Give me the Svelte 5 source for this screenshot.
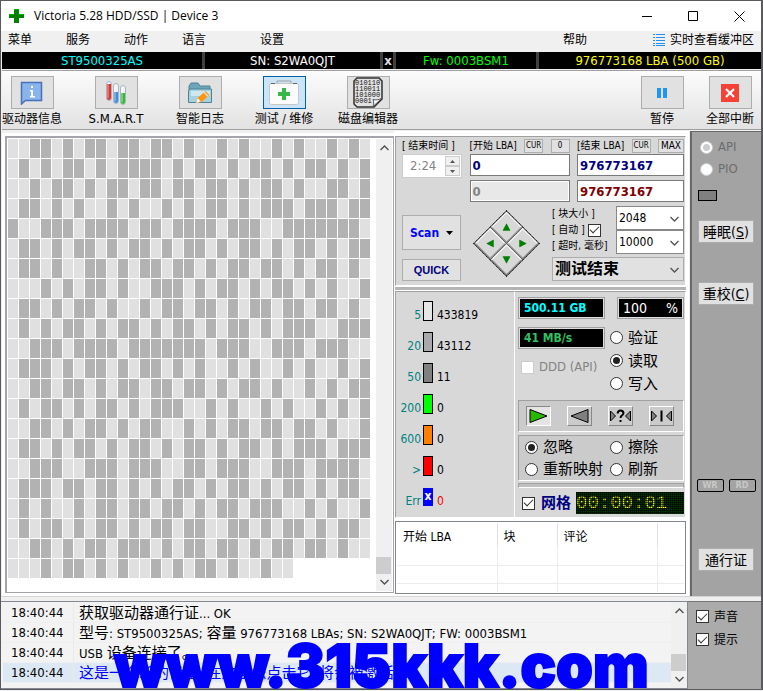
<script lang="ts">
	const rows = [
		'001101011011011010010100101001010',
		'010101101011110101101011010110101',
		'001011010110110110110101101001101',
		'011010100101001010110101110111011',
		'100111011110110111101110011111110',
		'011010110101101011010110101101011',
		'011010011010110110101101101011010',
		'000101011010011101011010110101001',
		'011010110100101101101011011011010',
		'010101101011010110101101011100111',
		'001110111101111111011100111011100',
		'011101011010110101001010010100101',
		'001101101011011011010110100101011',
		'010110101101011100101001010010101',
		'001101011010110010101101101101001',
		'011010110101101011010110101110111',
		'001110011101110011011100111011110',
		'011101101101010110101101011010110',
		'010100101101101101011011100101001',
		'010110101101011011001101011010110',
		'001101011011101011011010110110100',
		'00010110101001010110100100'
	];
	const cells = rows.join('').split('');

	const legend = [
		{ label: '5', color: '#e6e6e6', count: 433819 },
		{ label: '20', color: '#a9a9ad', count: 43112 },
		{ label: '50', color: '#808080', count: 11 },
		{ label: '200', color: '#00ff00', count: 0 },
		{ label: '600', color: '#ff8000', count: 0 },
		{ label: '>', color: '#ff0000', count: 0 },
		{ label: 'Err', color: '#0000ff', count: 0, error: true }
	];

	const tools = [
		{ icon: 'info', label: '驱动器信息' },
		{ icon: 'smart', label: 'S.M.A.R.T' },
		{ icon: 'logs', label: '智能日志' },
		{ icon: 'test', label: '测试 / 维修' },
		{ icon: 'hex', label: '磁盘编辑器' }
	];

	const log = [
		{ time: '18:40:44', text: '获取驱动器通行证... OK' },
		{ time: '18:40:44', text: '型号: ST9500325AS; 容量 976773168 LBAs; SN: S2WA0QJT; FW: 0003BSM1' },
		{ time: '18:40:44', text: 'USB 设备连接了。' },
		{ time: '18:40:44', text: '这是一个新的设备, 在这里您点击它, 将会被激活' }
	];

	// Chinese runs are set larger than the latin text around them
	const split = (text: string) => text.split(/([\u3000-\u9fff]+)/).filter(Boolean);
	const isHan = (text: string) => /[\u3000-\u9fff]/.test(text);

	let activeTool = $state('test');
	let mode = $state('read');
	let action = $state('ignore');
	let grid = $state(true);
	let sound = $state(true);
	let hints = $state(true);
	let auto = $state(true);
</script>

{#snippet chevron(up: boolean)}
	<svg class="chevron" viewBox="0 0 9 6" width="9" height="6">
		<path d={up ? 'M0.5 5 4.5 1 8.5 5' : 'M0.5 1 4.5 5 8.5 1'} fill="none" stroke="currentColor" stroke-width="1.4" />
	</svg>
{/snippet}

<div class="window">
	<header class="titlebar">
		<svg width="15" height="14" viewBox="0 0 15 14">
			<path d="M5 0h5v5h5v4h-5v5H5V9H0V5h5z" fill="#008000" />
			<path d="M5 0h5v1H5zM0 5h5v1H0zM10 5h5v1h-5z" fill="#00b000" />
		</svg>
		<h1>Victoria 5.28 HDD/SSD | Device 3</h1>
		<div class="controls">
			<button aria-label="Minimize"><svg width="11" height="11"><path d="M0 5.5h10" stroke="#000" /></svg></button>
			<button aria-label="Maximize"><svg width="11" height="11"><path d="M.5.5h9v9h-9z" fill="none" stroke="#000" /></svg></button>
			<button aria-label="Close"><svg width="11" height="11"><path d="M.5.5l10 10M10.5.5l-10 10" stroke="#000" /></svg></button>
		</div>
	</header>

	<nav class="menu">
		<button>菜单</button>
		<button>服务</button>
		<button>动作</button>
		<button>语言</button>
		<button class="settings">设置</button>
		<button class="help">帮助</button>
		<button class="buffer">
			<svg width="12" height="12" viewBox="0 0 12 12">
				<path d="M0 .5h2M3 .5h9M0 3.5h2M3 3.5h9M0 6.5h2M3 6.5h9M0 9.5h2M3 9.5h9M0 11.5h2M3 11.5h9" stroke="#2090f0" />
			</svg>
			实时查看缓冲区
		</button>
	</nav>

	<div class="drive">
		<span class="model">ST9500325AS</span>
		<span class="serial">SN: S2WA0QJT</span>
		<button class="hide" aria-label="Hide serial">x</button>
		<span class="firmware">Fw: 0003BSM1</span>
		<span class="capacity">976773168 LBA (500 GB)</span>
	</div>

	<div class="toolbar">
		{#each tools as tool (tool.icon)}
			<button class="tool {tool.icon}" class:active={activeTool === tool.icon} onclick={() => (activeTool = tool.icon)}>
				<span class="face">
					{#if tool.icon === 'info'}
						<svg width="24" height="24" viewBox="0 0 24 24">
							<path d="M1.5 1.5h20v18H5.500l-4 3.500z" fill="#8ab4ee" stroke="#4772b8" stroke-width="1.500" />
							<path d="M11 5h2v2h-2zM10 9h3v6h2v1.500h-5V15h1v-4.500h-1z" fill="#fff" />
						</svg>
					{:else if tool.icon === 'smart'}
						<svg width="22" height="26" viewBox="0 0 22 26">
							<g stroke="#a8b4c0" fill="#eef4fa">
								<rect x="1.500" y="1.500" width="5" height="19" rx="2.500" />
								<rect x="8.500" y="3.500" width="5" height="20" rx="2.500" />
								<rect x="15.500" y="5.500" width="5" height="19" rx="2.500" />
							</g>
							<path d="M2 4h4v14a2 2 0 0 1-4 0z" fill="#e03428" />
							<path d="M9 12h4v9a2 2 0 0 1-4 0z" fill="#3f8de0" />
							<path d="M16 13h4v9a2 2 0 0 1-4 0z" fill="#31bd31" />
							<path d="M3 3v15M10 5v16M17 7v15" stroke="#fff" opacity=".6" />
						</svg>
					{:else if tool.icon === 'logs'}
						<svg width="26" height="24" viewBox="0 0 26 24">
							<path d="M2 21V5l2-3h7l2 3h10v4" fill="#6fa5b9" stroke="#4c8299" />
							<path d="M3 8h21.500v13.500h-23V10z" fill="#a9d2df" stroke="#4c8299" />
							<path d="M4 10h19v5H4z" fill="#cfe8ef" />
							<path d="M9 22l1.500-5 8-7 4 4-8 7z" fill="#ff9410" />
							<path d="M9 22l1.500-5 3.500 3.500z" fill="#fff" stroke="#d7b48a" stroke-width=".5" />
							<path d="M17 11.300l4 4" stroke="#d9e4e9" stroke-width="1.500" />
						</svg>
					{:else if tool.icon === 'test'}
						<svg width="32" height="26" viewBox="0 0 32 26">
							<path d="M9 3V1h14v2" fill="none" stroke="#a0a0a0" />
							<rect x="1.500" y="3.500" width="29" height="21" rx="2" fill="#fbfbfb" stroke="#c8c8c8" />
							<path d="M3 3.500h4M25 3.500h4" stroke="#666" />
							<path d="M14 8h4v4h4v4h-4v4h-4v-4h-4v-4h4z" fill="#37b848" />
						</svg>
					{:else}
						<svg width="30" height="31" viewBox="0 0 30 31">
							<path d="M4 1h22l3 3v18l-8 8H4l-3-3V4z" fill="#e2e2e2" stroke="#303030" stroke-width="1.500" />
							<path d="M20 29.500c1-2 1-5 0-7 3 1 6 0 8.500-1z" fill="#fff" stroke="#555" />
							<g font-family="Liberation Mono" font-size="7" fill="#111">
								<text x="2" y="8">010110</text>
								<text x="2" y="14">110011</text>
								<text x="2" y="20">101000</text>
								<text x="2" y="26">0001</text>
							</g>
						</svg>
					{/if}
				</span>
				{tool.label}
			</button>
		{/each}
		<button class="tool pause">
			<span class="face"><svg width="10" height="10"><path d="M0 0h4v10H0zM6 0h4v10H6z" fill="#1e96f5" /></svg></span>
			暂停
		</button>
		<button class="tool break">
			<span class="face">
				<svg width="18" height="18"><path d="M0 0h18v18H0z" fill="#f44336" /><path d="M5 5l8 8M13 5l-8 8" stroke="#fff" stroke-width="2.200" /></svg>
			</span>
			全部中断
		</button>
	</div>

	<main>
		<section class="map">
			<div class="cells">
				{#each cells as cell}
					<i class:slow={cell === '1'}></i>
				{/each}
			</div>
			<div class="scrollbar">
				{@render chevron(true)}
				<span class="thumb"></span>
				{@render chevron(false)}
			</div>
		</section>

		<div class="middle">
			<section class="panel scan">
				<div class="range">
					<div class="stack">
						<div class="caption"><label for="end-time">[ 结束时间 ]</label></div>
						<div class="spin">
							<input id="end-time" value="2:24" disabled />
							<div>
								<button aria-label="Increase" disabled><svg width="5" height="3"><path d="M0 3l2.500-3L5 3z" fill="#555" /></svg></button>
								<button aria-label="Decrease" disabled><svg width="5" height="3"><path d="M0 0l2.500 3L5 0z" fill="#555" /></svg></button>
							</div>
						</div>
					</div>
					<div class="stack start">
						<div class="caption">
							<label for="start-lba">[开始 LBA]</label>
							<button>CUR</button>
							<button>0</button>
						</div>
						<input id="start-lba" class="lba" value="0" />
						<input class="lba" value="0" aria-label="Current LBA" disabled />
					</div>
					<div class="stack end">
						<div class="caption">
							<label for="end-lba">[结束 LBA]</label>
							<button>CUR</button>
							<button class="max">MAX</button>
						</div>
						<input id="end-lba" class="lba" value="976773167" />
						<input class="lba last" value="976773167" aria-label="Last LBA" />
					</div>
				</div>

				<div class="run">
					<div class="actions">
						<button class="go">Scan <svg width="7" height="4"><path d="M0 0h7L3.500 4z" fill="#000" /></svg></button>
						<button class="quick">QUICK</button>
					</div>
					<div class="pad">
						<div>
							{#each ['Up', 'Right', 'Left', 'Down'] as direction}
								<button aria-label={direction} class={direction.toLowerCase()}>
									<svg width="8" height="8" viewBox="0 0 8 8"><path d="M0 7.500 4 0l4 7.500z" fill="#008000" /></svg>
								</button>
							{/each}
						</div>
					</div>
					<div class="options">
						<div class="names">
							<label for="block">[ 块大小 ]</label>
							<label>[ 自动 ] <input type="checkbox" bind:checked={auto} /></label>
							<label for="timeout">[ 超时, 毫秒]</label>
						</div>
						<div class="selects">
							<div class="select"><select id="block"><option>2048</option></select>{@render chevron(false)}</div>
							<div class="select"><select id="timeout"><option>10000</option></select>{@render chevron(false)}</div>
						</div>
						<div class="select finish">
							<select aria-label="结束操作"><option>测试结束</option></select>{@render chevron(false)}
						</div>
					</div>
				</div>
			</section>

			<div class="progress"></div>

			<div class="results">
				<section class="panel legend">
					{#each legend as item (item.label)}
						<div>
							<span class="limit">{item.label}</span>
							{#if item.error}
								<span class="error">x</span>
							{:else}
								<i style="background: {item.color}"></i>
							{/if}
							<span class:failed={item.error}>{item.count}</span>
						</div>
					{/each}
				</section>

				<section class="panel status">
					<div class="readout">
						<div class="stack">
							<output class="size">500.11 GB</output>
							<output class="speed">41 MB/s</output>
							<label class="ddd"><input type="checkbox" disabled /> DDD (API)</label>
						</div>
						<div class="modes">
							<output class="percent"><span>100</span><span>%</span></output>
							<label><input type="radio" value="verify" bind:group={mode} /> 验证</label>
							<label><input type="radio" value="read" bind:group={mode} /> 读取</label>
							<label><input type="radio" value="write" bind:group={mode} /> 写入</label>
						</div>
					</div>
					<div class="group player">
						<button class="on" aria-label="Forward"><svg width="19" height="14"><path d="M1 .5v13L18 7z" fill="#28b800" stroke="#000" /></svg></button>
						<button aria-label="Backward"><svg width="19" height="14"><path d="M18 .5v13L1 7z" fill="#808080" stroke="#000" /></svg></button>
						<button aria-label="Random">
							<svg width="23" height="14">
								<path d="M1.500 2v10l5-5zM21.500 2v10l-5-5z" fill="#808080" stroke="#000" />
								<path d="M8.500 4.500Q9 1.500 11.500 1.500t3 2.500q0 1.500-1.500 2.300T11.500 9M11.500 11v2" fill="none" stroke="#000" stroke-width="2" />
							</svg>
						</button>
						<button aria-label="Butterfly">
							<svg width="23" height="14">
								<path d="M1.500 2v10l5-5zM21.500 2v10l-5-5z" fill="#808080" stroke="#000" />
								<path d="M11.500 1.500v11" stroke="#000" stroke-width="2" />
							</svg>
						</button>
					</div>
					<div class="group remap">
						<label><input type="radio" value="ignore" bind:group={action} /> 忽略</label>
						<label><input type="radio" value="erase" bind:group={action} /> 擦除</label>
						<label><input type="radio" value="remap" bind:group={action} /> 重新映射</label>
						<label><input type="radio" value="refresh" bind:group={action} /> 刷新</label>
					</div>
					<div class="divider"></div>
					<div class="elapsed">
						<label><input type="checkbox" bind:checked={grid} /> 网格</label>
						<time>00:00:01</time>
					</div>
				</section>
			</div>

			<div class="defects">
				<table>
					<thead>
						<tr><th class="first">开始 LBA</th><th class="block">块</th><th class="comment">评论</th><th></th></tr>
					</thead>
					<tbody>
						<tr><td></td><td></td><td></td><td></td></tr>
						<tr><td></td><td></td><td></td><td></td></tr>
						<tr class="cut"><td></td><td></td><td></td><td></td></tr>
					</tbody>
				</table>
			</div>
		</div>

		<aside>
			<label class="off"><input type="radio" name="access" checked disabled /> API</label>
			<label class="off"><input type="radio" name="access" disabled /> PIO</label>
			<span class="led"></span>
			<button class="sleep">睡眠(<u>S</u>)</button>
			<button class="recal">重校(<u>C</u>)</button>
			<div class="lamps"><span>WR</span><span>RD</span></div>
			<button class="passport">通行证</button>
		</aside>
	</main>

	<footer>
		<section class="log">
			<div class="lines">
				{#each log as entry, i}
					<p class:current={i === log.length - 1}>
						<time>{entry.time}</time>
						<span class="message">{#each split(entry.text) as part}<span class:han={isHan(part)}>{part}</span>{/each}</span>
					</p>
				{/each}
			</div>
			<div class="scrollbar">
				{@render chevron(true)}
				<span class="thumb"></span>
				{@render chevron(false)}
			</div>
			<strong class="watermark">www.315kkk.com</strong>
		</section>
		<div class="toggles">
			<label><input type="checkbox" bind:checked={sound} /> 声音</label>
			<label><input type="checkbox" bind:checked={hints} /> 提示</label>
		</div>
	</footer>
</div>

<style>
	:global(body) {
		margin: 0;
		background: #f0f0f0;
	}

	.window {
		border: 1px solid #5a5a5e;
		border-right-width: 2px;
		background: #f0f0f0;
		color: #000;
		font: 12px/16px 'DejaVu Sans Condensed', 'Noto Sans CJK SC', sans-serif;
		white-space: nowrap;
		overflow: hidden;
	}

	.window * {
		box-sizing: border-box;
	}

	button,
	input,
	select {
		margin: 0;
		padding: 0;
		border: 0;
		border-radius: 0;
		background: none;
		font: inherit;
		color: inherit;
	}

	svg {
		display: block;
		flex-shrink: 0;
	}

	.titlebar {
		display: flex;
		align-items: center;
		height: 30px;
		padding: 0 16px 0 8px;
		background: #fff;
	}

	.titlebar h1 {
		flex: 1;
		margin: 0 0 0 10px;
		font: 12px/16px 'Open Sans', sans-serif;
	}

	.controls {
		display: flex;
		gap: 35px;
	}

	.menu {
		display: flex;
		align-items: center;
		gap: 34px;
		height: 20px;
		padding: 0 7px 2px 7px;
	}

	.menu .settings {
		margin-left: 20px;
	}

	.menu .help {
		margin-left: auto;
	}

	.menu .buffer {
		display: flex;
		align-items: center;
		gap: 5px;
		margin-left: 32px;
	}

	.drive {
		display: grid;
		grid-template-columns: 200fr 175fr 10px 140fr 222fr;
		gap: 3px;
		margin: 1px 0 0 1px;
		background: #404040;
		font-size: 13px;
		line-height: 17px;
		text-align: center;
	}

	.drive > * {
		background: #000;
	}

	.model {
		color: #00ffff;
	}

	.serial {
		color: #fff;
	}

	.hide {
		color: #ddd;
		font-weight: bold;
	}

	.firmware {
		color: #00ff00;
	}

	.capacity {
		color: #ffff00;
	}

	.toolbar {
		display: flex;
		gap: 24px;
		height: 60px;
		margin: 1px 0 0 1px;
		padding: 5px 1px 0 0;
		border: 1px solid #a0a0a0;
		border-width: 1px 0;
		background: linear-gradient(#fcfcfc, #e2e2e2);
	}

	.tool {
		display: flex;
		flex-direction: column;
		align-items: center;
		width: 60px;
	}

	.tool.smart {
		font-size: 13px;
	}

	.tool .face {
		display: flex;
		align-items: center;
		justify-content: center;
		width: 43px;
		height: 33px;
		margin-bottom: 2px;
		border: 1px solid #adadad;
		background: #e1e1e1;
	}

	.tool.active .face {
		border-color: #0060a8;
		background: #cce4f7;
	}

	.pause {
		margin-left: auto;
	}

	.break {
		margin-left: -16px;
	}

	main {
		display: grid;
		grid-template-columns: minmax(0, 1fr) 295px 72px;
		height: 466px;
		margin-top: 1px;
		border-bottom: 1px solid #d4d4d4;
	}

	.map {
		display: flex;
		margin: 5px 0 3px 4px;
		border: 2px solid #a4a4aa;
		border-width: 2px 1px 1px 2px;
		outline: 3px solid #fff;
		background: #fff;
		padding: 1px;
	}

	.cells {
		flex: 1;
		display: grid;
		grid-template-columns: repeat(33, 1fr);
		grid-auto-rows: 19px;
		align-content: start;
		gap: 1px;
		margin-right: 6px;
	}

	.cells i {
		background: #e0e0e0;
	}

	.cells .slow {
		background: #b2b2b2;
	}

	.scrollbar {
		display: flex;
		flex-direction: column;
		align-items: center;
		width: 16px;
		padding: 6px 0;
		background: #f0f0f0;
		color: #505050;
	}

	.thumb {
		align-self: stretch;
		height: 17px;
		margin: auto 1px 5px 0;
		background: #cdcdcd;
	}

	.middle {
		position: relative;
		display: flex;
		flex-direction: column;
		padding: 5px 3px 0 1px;
		background: #fff;
	}

	.panel {
		border: 1px solid #a0a0a0;
		border-color: #a0a0a0 #fff #fff #a0a0a0;
		background: #d8d8d8;
	}

	.stack {
		display: flex;
		flex-direction: column;
		gap: 4px;
	}

	.scan {
		height: 150px;
		padding: 1px 1px 4px 6px;
	}

	.range,
	.run {
		display: flex;
		justify-content: space-between;
	}

	.range {
		height: 68px;
	}

	.range .stack:first-child {
		width: 60px;
	}

	.range .start {
		width: 100px;
	}

	.range .end {
		width: 107px;
	}

	.caption {
		display: flex;
		align-items: center;
		justify-content: space-between;
		height: 16px;
		margin-bottom: -4px;
		font-size: 10px;
	}

	.caption button {
		width: 19px;
		height: 14px;
		border: 1px solid #adadad;
		background: #e1e1e1;
		font-size: 8px;
		line-height: 12px;
	}

	.caption .max {
		width: 26px;
		font-size: 10px;
	}

	.spin {
		display: flex;
		height: 24px;
		padding: 1px;
		border: 1px solid #ccc;
		background: #fff;
	}

	.spin input {
		flex: 1;
		min-width: 0;
		padding-left: 6px;
		color: #838383;
		font-size: 13px;
	}

	.spin button {
		display: flex;
		align-items: center;
		justify-content: center;
		width: 15px;
		height: 10px;
		border: 1px solid #ccc;
		background: #f0f0f0;
	}

	.lba {
		width: 100%;
		height: 22px;
		padding: 0 2px;
		border: 1px solid #7a7a7a;
		background: #fff;
		color: #000080;
		font-size: 13px;
		font-weight: bold;
	}

	.lba:disabled {
		border-color: #7a7a7a;
		background: #e8e8e8;
		color: #838383;
		box-shadow: inset 0 0 0 1px #fff;
	}

	.lba.last {
		color: #800000;
	}

	.run {
		height: 75px;
	}

	.actions {
		display: flex;
		flex-direction: column;
		justify-content: end;
		gap: 9px;
		width: 59px;
	}

	.actions button {
		height: 22px;
		border: 1px solid #adadad;
		background: #e1e1e1;
		color: #000080;
		font-weight: bold;
	}

	.actions .go {
		display: flex;
		align-items: center;
		justify-content: center;
		gap: 7px;
		height: 35px;
		color: #0000ff;
	}

	.actions .quick {
		font: bold 11px/20px 'Liberation Sans', sans-serif;
	}

	.pad {
		display: flex;
		align-items: center;
		justify-content: center;
		width: 66px;
	}

	.pad div {
		display: grid;
		grid-template-columns: repeat(2, 22px);
		gap: 1px;
		background: #555;
		rotate: 45deg;
		border: 1px dotted #000;
	}

	.pad button {
		display: flex;
		align-items: center;
		justify-content: center;
		height: 22px;
		border: 1px solid #fff;
		border-right-color: #888;
		border-bottom-color: #888;
		background: #d8d8d8;
	}

	.pad .up svg {
		rotate: -45deg;
	}

	.pad .right svg {
		rotate: 45deg;
	}

	.pad .left svg {
		rotate: -135deg;
	}

	.pad .down svg {
		rotate: 135deg;
	}

	.options {
		display: grid;
		grid-template-columns: 64px 68px;
		grid-template-rows: 48px 24px;
		row-gap: 3px;
	}

	.names {
		display: flex;
		flex-direction: column;
		font-size: 10px;
		line-height: 14px;
	}

	.names label {
		display: flex;
		align-items: center;
		gap: 3px;
		height: 16px;
	}

	.select {
		position: relative;
		height: 24px;
		border: 1px solid #888;
		background: #fff;
	}

	.select select {
		appearance: none;
		width: 100%;
		height: 100%;
		padding-left: 2px;
	}

	.select .chevron {
		position: absolute;
		right: 4px;
		top: 9px;
		color: #555;
		pointer-events: none;
	}

	.finish {
		grid-column: 1 / -1;
		border-color: #adadad;
		background: #e1e1e1;
		font-size: 16px;
		font-weight: bold;
	}

	.progress {
		height: 5px;
		border: solid #fff;
		border-width: 1px 0;
		background: #b4b4b4;
	}

	.results {
		display: grid;
		grid-template-columns: 120px 1fr;
	}

	.legend {
		height: 227px;
		padding-top: 9px;
	}

	.legend div {
		display: flex;
		align-items: center;
		height: 31px;
		padding-bottom: 11px;
		gap: 4px;
	}

	.legend i,
	.error {
		width: 10px;
		height: 20px;
		border: 1px solid #000;
	}

	.legend span {
		margin-top: 8px;
	}

	.legend .limit {
		width: 25px;
		margin-right: -2px;
		text-align: right;
		color: #008080;
	}

	.legend .error {
		height: 18px;
		margin-top: 0;
		border: 0;
		background: #0000ff;
		color: #fff;
		font-weight: bold;
		text-align: center;
	}

	.legend .failed {
		color: #ff0000;
	}

	.status {
		padding: 5px 1px 0 3px;
		border-left: 0;
	}

	.readout {
		display: flex;
		justify-content: space-between;
		height: 103px;
	}

	.readout .stack {
		width: 87px;
		gap: 8px;
	}

	output {
		display: block;
		height: 22px;
		padding: 0 5px;
		border: 1px solid #a0a0a0;
		background: #000;
		box-shadow: inset 0 0 0 1px #ddd;
		line-height: 20px;
	}

	.size,
	.speed {
		font-weight: bold;
	}

	.size {
		color: #00ffff;
	}

	.speed {
		color: #30c060;
	}

	.percent {
		display: flex;
		justify-content: space-between;
		width: 67px;
		margin-bottom: 7px;
		color: #fff;
		font-size: 14px;
	}

	.modes label,
	.remap label {
		display: flex;
		align-items: center;
		gap: 5px;
		height: 23px;
		font-size: 15px;
	}

	.modes label {
		margin-left: -7px;
	}

	.ddd {
		display: flex;
		align-items: center;
		gap: 5px;
		padding: 2px 3px;
		color: #838383;
		font-size: 13px;
	}

	.group {
		border: 1px solid #a0a0a0;
		border-color: #a0a0a0 #fff #fff #a0a0a0;
		background: #cbcbcb;
	}

	.player {
		display: flex;
		gap: 16px;
		height: 32px;
		padding: 5px 7px;
	}

	.player button {
		display: flex;
		align-items: center;
		justify-content: center;
		width: 25px;
		height: 20px;
		border: 1px solid #fff;
		border-right-color: #888;
		border-bottom-color: #888;
	}

	.player .on {
		border-color: #888 #fff #fff #888;
		background: #e4e4e4;
	}

	.remap {
		display: grid;
		grid-template-columns: 85px 1fr;
		height: 46px;
		margin: 3px 0 2px;
		padding-left: 6px;
		align-content: start;
	}

	.remap label {
		height: 22px;
	}

	.divider {
		height: 5px;
		border: 1px solid #a0a0a0;
		border-bottom-color: #fff;
		background: #c0c0c0;
	}

	.elapsed {
		display: flex;
		align-items: center;
		justify-content: space-between;
		margin-top: 4px;
		padding-left: 4px;
	}

	.elapsed label {
		display: flex;
		align-items: center;
		gap: 6px;
		color: #000080;
		font-size: 15px;
		font-weight: bold;
	}

	.elapsed time {
		position: relative;
		width: 108px;
		height: 22px;
		background: #003800;
		color: #ffff00;
		font: 19px/22px 'Liberation Mono', monospace;
	}

	/* lcd dots laid over the digits */
	.elapsed time::after {
		content: '';
		position: absolute;
		inset: 0;
		background:
			repeating-linear-gradient(rgba(0, 0, 0, 0.6) 0 1px, transparent 1px 2px),
			repeating-linear-gradient(90deg, rgba(0, 0, 0, 0.5) 0 1px, transparent 1px 2px);
	}

	.defects {
		height: 73px;
		margin-top: 3px;
		padding: 1px;
		border: 1px solid #828790;
		background: #fff;
	}

	table {
		width: 100%;
		table-layout: fixed;
		border-collapse: collapse;
	}

	th {
		height: 24px;
		padding: 4px 6px 0;
		border-right: 1px solid #e2e2e2;
		font-weight: normal;
		text-align: left;
	}

	th:last-child,
	td:last-child {
		border-right: 0;
	}

	.first {
		width: 100px;
	}

	.block {
		width: 60px;
	}

	.comment {
		width: 100px;
	}

	td {
		height: 18px;
		padding: 0;
		border-right: 1px solid #ececec;
		border-bottom: 1px solid #ececec;
	}

	.cut td {
		height: 9px;
		border-bottom: 0;
	}

	aside {
		display: flex;
		flex-direction: column;
		align-items: center;
		margin-left: 1px;
		padding: 4px 1px 25px 0;
		border: 2px solid #696969;
		border-width: 1px 0 0 2px;
		background: #a3a3a3;
	}

	aside label {
		display: flex;
		align-items: center;
		align-self: start;
		gap: 5px;
		height: 22px;
		padding-left: 8px;
		font-size: 13px;
	}

	.off {
		color: #6c6c6c;
	}

	.led {
		align-self: start;
		width: 19px;
		height: 11px;
		margin: 10px 0 19px 6px;
		border: 1px solid #000;
		background: #808080;
	}

	aside button {
		width: 56px;
		height: 23px;
		border: 1px solid #adadad;
		background: #e1e1e1;
		font-size: 14px;
		line-height: 18px;
	}

	.recal {
		margin-top: 39px;
	}

	.lamps {
		display: flex;
		gap: 5px;
		margin-top: auto;
	}

	.lamps span {
		width: 27px;
		height: 13px;
		border: 1px solid #000;
		border-radius: 2px;
		color: #c8c8c8;
		font-size: 9px;
		font-weight: bold;
		line-height: 11px;
		text-align: center;
	}

	.passport {
		margin-top: 56px;
	}

	input[type='checkbox'],
	input[type='radio'] {
		display: grid;
		place-items: center;
		flex-shrink: 0;
		appearance: none;
		width: 13px;
		height: 13px;
		border: 1px solid #333;
		background: #fff;
	}

	input[type='radio'] {
		border-radius: 50%;
	}

	input[type='checkbox']:disabled,
	input[type='radio']:disabled {
		border-color: #ccc;
	}

	input[type='checkbox']:checked::before {
		content: '';
		width: 8px;
		height: 4px;
		margin-bottom: 3px;
		border: solid #333;
		border-width: 0 0 1px 1px;
		rotate: -45deg;
	}

	input[type='radio']:checked::before {
		content: '';
		width: 7px;
		height: 7px;
		border-radius: 50%;
		background: #222;
	}

	input[type='radio']:disabled:checked::before {
		background: #ccc;
	}

	footer {
		display: grid;
		grid-template-columns: 1fr 73px;
		margin-top: 4px;
		height: 88px;
	}

	.log {
		position: relative;
		display: flex;
		border: 1px solid #828790;
		border-left: 0;
		background: #f3f3f3;
	}

	.lines {
		flex: 1;
		padding: 1px 0 0 2px;
		font-size: 13px;
	}

	.lines p {
		display: flex;
		height: 20px;
		margin: 0;
		border-bottom: 1px solid #efefef;
		line-height: 20px;
	}

	.lines time {
		width: 71px;
		padding-left: 8px;
		border-right: 1px solid #eaeaea;
	}

	.message {
		padding-left: 5px;
	}

	.han {
		font-size: 15px;
	}

	.current {
		background: #dce9f4;
	}

	.current .message {
		color: #0000ff;
	}

	.log .thumb {
		margin-bottom: 5px;
	}

	.watermark {
		position: absolute;
		left: 113px;
		bottom: 0;
		color: #0000ff;
		font: 900 59px/44px Inter, sans-serif;
		-webkit-text-stroke: 2px #0000ff;
		pointer-events: none;
	}

	.toggles {
		padding: 3px 0 0 8px;
		border-top: 1px solid #777;
		background: #ababab;
	}

	.toggles label {
		display: flex;
		align-items: center;
		gap: 5px;
		height: 23px;
	}
</style>
